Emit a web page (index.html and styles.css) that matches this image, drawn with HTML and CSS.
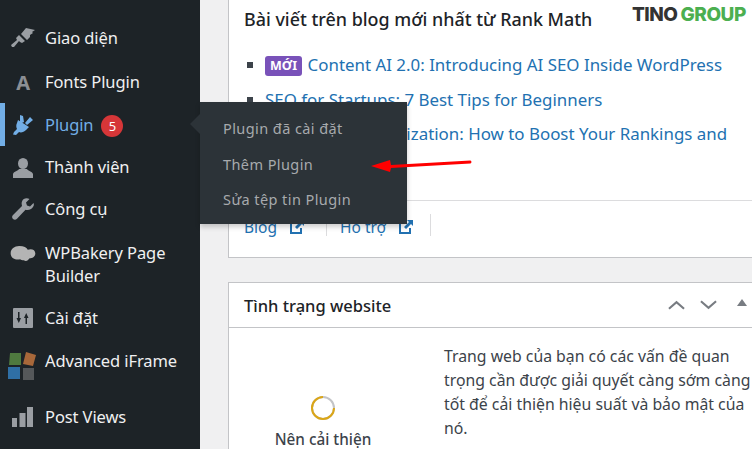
FILE: index.html
```html
<!DOCTYPE html>
<html lang="vi">
<head>
<meta charset="utf-8">
<title>Plugin</title>
<link rel="stylesheet" href="styles.css">
</head>
<body>
<div class="page">
  <nav class="side">
    <a class="item h-giao"><svg class="ic ic-brush" viewBox="0 0 24 20"><path d="M15 0l9 2-3 2 1 1-3 2 0 2-3 3-6-6zM8 7l6 6-3 2-2-1-1-1-5 6-2 0-1-2 6-5-1-2z"/></svg><span>Giao diện</span></a>
    <a class="item h-fonts"><span class="ic ic-a">A</span><span>Fonts Plugin</span></a>
    <a class="item h-plugin active"><svg class="ic ic-plug" viewBox="0 0 20 20"><path d="M17 2l3 3-6 5-2-2zM7 0l3 1 1 6-4 2zM5 5l11 7-3 3c-2 2-5 3-7 2l-3 3-3-.5L1 17l3-3c-1-2-1-4 0-6z"/></svg><span>Plugin</span><span class="badge">5</span></a>
    <a class="item h-user"><svg class="ic ic-user" viewBox="0 0 20 20"><ellipse cx="10" cy="5.500" rx="5" ry="5.500"/><path d="M0 16c1-3 5-3 6-5h8c1 2 5 2 6 5v4H0z"/></svg><span>Thành viên</span></a>
    <a class="item h-tool"><svg class="ic ic-tool" viewBox="0 0 22 22"><path d="M21.500 5l-3.500 3.500-3-1-1-3L17.500 1c-3-1.500-6.500-.500-7.500 2.500-.700 2-.200 3.500 0 4.500L1 17c-1.200 1.200-1.200 3 0 4s2.800 1 4-.200l8.500-9c1.500.500 3.500.500 5.500-.800 2.500-1.500 3.500-4 2.500-6z"/></svg><span>Công cụ</span></a>
    <a class="item h-wpb"><svg class="ic ic-wide" viewBox="0 0 26 20"><path d="M9 0c5 0 8 1.500 9 4 4-1.500 8 0 8 4 0 3-3 5-6 5l-2 2c-1 1-3 1-4 0-2 0-3 0-4-1-5 1-10-1-10-6.500C0 3 4 0 9 0z"/></svg><span>WPBakery Page Builder</span></a>
    <a class="item h-set"><svg class="ic ic-set" viewBox="0 0 20 20"><rect width="20" height="20" rx="1"/><path class="cut" d="M5 4h1.500v6H8l-2.200 5L3.500 10H5zM12.500 16V10H11l2.200-5 2.300 5H14v6z"/></svg><span>Cài đặt</span></a>
    <a class="item h-adv"><svg class="ic ic-adv" viewBox="0 0 28 28"><path fill="#4f7a3f" d="M2 1h11v12H1z"/><path fill="#a8683a" d="M18 0l10 3-3 11-10-2z"/><path fill="#2f6fa5" d="M0 15h12v12H0z"/><path fill="#55585a" d="M15 16h11v12H15z"/></svg><span>Advanced iFrame</span></a>
    <a class="item h-post"><svg class="ic ic-post" viewBox="0 0 21 20"><path d="M0 11h5v9H0zM7.500 6h6v14h-6zM15 0h6v20h-6z"/></svg><span>Post Views</span></a>
  </nav>

  <main class="main">
    <section class="card card-news">
      <h2 class="news-title">Bài viết trên blog mới nhất từ Rank Math</h2>
      <ul class="news">
        <li><span class="tag">MỚI</span> <a>Content AI 2.0: Introducing AI SEO Inside WordPress</a></li>
        <li><a>SEO for Startups: 7 Best Tips for Beginners</a></li>
        <li><a>Image SEO Optimization: How to Boost Your Rankings and Traffic</a></li>
      </ul>
      <div class="links">
        <a class="lnk lnk-blog">Blog <svg class="ext" viewBox="0 0 16 16"><path d="M1 3h7v2H3v8h8V9h2v6H1z"/><path d="M9 1h6v6l-2-2-5 5-2-2 5-5z"/></svg></a>
        <a class="lnk">Hỗ trợ <svg class="ext" viewBox="0 0 16 16"><path d="M1 3h7v2H3v8h8V9h2v6H1z"/><path d="M9 1h6v6l-2-2-5 5-2-2 5-5z"/></svg></a>
      </div>
    </section>

    <section class="card card-health">
      <header class="health-head">
        <h2>Tình trạng website</h2>
        <div class="ctrls">
          <svg viewBox="0 0 18 10"><path d="M1 9l8-7 8 7"/></svg>
          <svg viewBox="0 0 18 10"><path d="M1 1l8 7 8-7"/></svg>
          <i class="tri"></i>
        </div>
      </header>
      <div class="health-body">
        <div class="status">
          <svg class="ring" viewBox="0 0 24 24"><circle cx="12" cy="12" r="11" class="r-bg"/><path d="M12 1a11 11 0 1 0 11 11" class="r-fg"/></svg>
          <strong>Nên cải thiện</strong>
        </div>
        <p class="desc">Trang web của bạn có các vấn đề quan trọng cần được giải quyết càng sớm càng tốt để cải thiện hiệu suất và bảo mật của nó.</p>
      </div>
    </section>
  </main>

  <div class="logo"><span class="t1">TINO</span><span class="t2">GROUP</span></div>

  <div class="fly">
    <i class="fly-arrow"></i>
    <a>Plugin đã cài đặt</a>
    <a>Thêm Plugin</a>
    <a>Sửa tệp tin Plugin</a>
  </div>

  <svg class="red" viewBox="0 0 101 12" preserveAspectRatio="none"><path d="M0 6L19 0l1 5 79.500-4.500Q101.500 2 99.500 3.500L20 8l-1 4z"/></svg>
</div>
</body>
</html>
```
FILE: styles.css
```css
* { box-sizing: border-box; }
html, body { margin: 0; padding: 0; }
body { font-family: "Noto Sans", "Open Sans", sans-serif; background: #f0f0f1; overflow: hidden; }
.page { position: relative; width: 752px; height: 449px; overflow: hidden; display: flex; }

.side { width: 200px; height: 449px; overflow: hidden; flex: none; background: #1d2327; padding-top: 15px; color: #f0f0f1; font-size: 16.500px; line-height: 23px; display: flex; flex-direction: column; }
.item { flex: none; display: flex; align-items: center; padding-left: 45px; position: relative; letter-spacing: -.1px; }
.h-giao { height: 45px; }
.h-fonts { height: 43px; }
.h-plugin { height: 43px; }
.h-user { height: 41px; }
.h-tool { height: 42px; }
.h-wpb { height: 69px; }
.h-set { height: 39px; }
.h-adv { height: 47px; }
.h-post { height: 64px; }
.ic { position: absolute; left: 12px; top: 50%; width: 22px; height: 22px; margin-top: -11px; fill: #9a9ea3; }
.ic-a { font-size: 20px; font-weight: 700; color: #8c8f94; text-align: center; line-height: 22px; margin-top: -10px; }
.ic-brush { left: 11px; width: 24px; height: 20px; margin-top: -10px; }
.ic-plug { left: 13px; width: 20px; height: 20px; margin-top: -10px; }
.ic-user { left: 13px; width: 20px; height: 20px; margin-top: -9px; }
.ic-tool { left: 12px; width: 22px; height: 22px; margin-top: -10px; }
.ic-wide { left: 10px; width: 26px; height: 19px; margin-top: -18px; fill: #b4b4b4; }
.ic-set { left: 13px; width: 20px; height: 20px; margin-top: -10px; }
.ic-adv { left: 8px; width: 28px; height: 28px; margin-top: -9px; }
.ic-post { left: 12px; width: 21px; height: 20px; margin-top: -9px; }
.cut { fill: #1d2327; }
.active { color: #72aee6; }
.active .ic { fill: #72aee6; }
.active::before { content: ""; position: absolute; left: 0; top: 0; bottom: 0; width: 5px; background: #72aee6; }
.badge { width: 22px; height: 22px; margin: 3px 0 0 8px; border-radius: 50%; background: #d63638; color: #fff; font-size: 13px; text-align: center; line-height: 22px; letter-spacing: 0; }

.main { flex: 1; min-width: 0; padding-left: 28px; color: #1d2327; }
.card { width: 540px; background: #fff; border: 1px solid #c3c4c7; }
.card-news { height: 258px; border-top: 0; padding: 7px 0 0 15px; position: relative; margin-bottom: 24px; }
.news-title { margin: 0; font-size: 17.900px; font-weight: 500; line-height: 24px; }
.news { list-style: none; margin: 22px 0 0; padding: 0 0 0 21px; width: 490px; font-size: 16.900px; line-height: 24px; color: #2271b1; }
.news li { position: relative; margin-bottom: 10.500px; height: 24px; }
.news li::before { content: ""; position: absolute; left: -18px; top: 9px; width: 6px; height: 6px; background: #3c434a; }
.tag { display: inline-block; background: #7952b9; color: #fff; font-size: 12.500px; font-weight: 700; line-height: 20px; height: 20px; padding: 0 5px; border-radius: 3px; vertical-align: 1px; margin-right: 1px; }
.links { position: absolute; left: 0; right: 0; top: 200px; height: 56px; border-top: 1px solid #dcdcde; padding: 13px 0 0 15px; display: flex; font-size: 15.500px; color: #2271b1; }
.lnk { display: flex; align-items: center; height: 22px; padding: 4px 16px 0 0; margin-right: 13px; border-right: 1px solid #dcdcde; gap: 12px; }
.lnk-blog { padding-right: 21px; }
.ext { width: 16px; height: 16px; fill: #2271b1; }

.card-health { height: 200px; }
.health-head { height: 45px; border-bottom: 1px solid #c3c4c7; display: flex; align-items: center; justify-content: space-between; padding: 0 0 0 15px; }
.health-head h2 { margin: 0; font-size: 16.500px; font-weight: 500; }
.ctrls { display: flex; align-items: center; width: 89px; margin-right: 10px; gap: 15px; flex: none; }
.ctrls svg { width: 17px; height: 10px; fill: none; stroke: #787c82; stroke-width: 2.200; }
.tri { width: 0; height: 0; border-left: 5px solid transparent; border-right: 5px solid transparent; border-bottom: 7px solid #787c82; margin: -5px 0 0 5px; }
.health-body { display: flex; }
.status { width: 188px; flex: none; padding-top: 68px; display: flex; flex-direction: column; align-items: center; }
.ring { width: 24px; height: 24px; fill: none; }
.r-bg { stroke: #c3c4c7; stroke-width: 2; }
.r-fg { stroke: #dba617; stroke-width: 2; }
.status strong { font-size: 15.300px; font-weight: 500; margin-top: 9px; line-height: 20px; color: #3c434a; }
.desc { margin: 16px 0 0 27px; width: 311px; font-size: 15.800px; line-height: 24px; color: #3c434a; }

.logo { position: absolute; left: 632px; top: 5px; font-family: "Inter", sans-serif; font-weight: 800; font-size: 19px; line-height: 20px; letter-spacing: -.5px; }
.t1 { color: #333; }
.t2 { color: #4caf50; margin-left: 3px; }

.fly { position: absolute; left: 200px; top: 102px; width: 207px; height: 122px; background: #2c3338; padding-top: 9px; display: flex; flex-direction: column; color: #a7aaad; font-size: 14.500px; line-height: 35.500px; box-shadow: 0 3px 5px rgba(0,0,0,.2); }
.fly a { padding-left: 23px; letter-spacing: .42px; }
.fly-arrow { position: absolute; left: -10px; top: 12px; border: 10px solid transparent; border-left: 0; border-right-color: #2c3338; }
.red { position: absolute; left: 371px; top: 160px; width: 101px; height: 12px; fill: #f00; }
```
